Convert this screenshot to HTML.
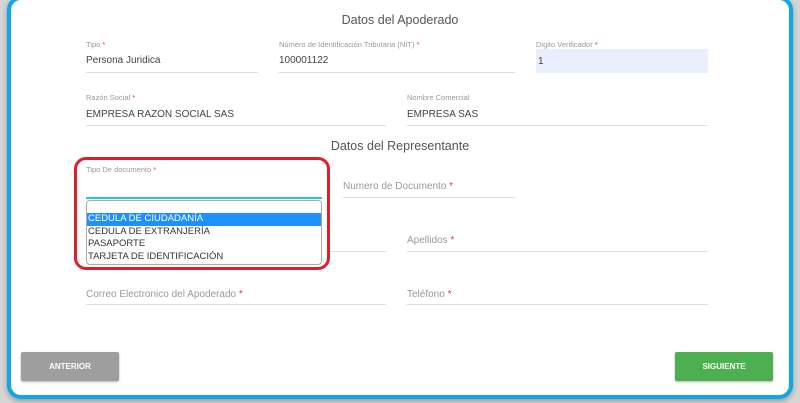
<!DOCTYPE html>
<html><head><meta charset="utf-8"><style>
*{box-sizing:border-box;margin:0;padding:0}
body{width:800px;height:403px;background:#d6d6d6;font-family:"Liberation Sans",sans-serif;position:relative;overflow:hidden}
.card{position:absolute;left:7px;top:-4px;width:786px;height:403px;background:#fff;border:4px solid #0ea5e9;border-radius:14px;box-shadow:0 2px 6px rgba(0,0,0,.3)}
.t{position:absolute;font-size:12.5px;color:#555;left:0;width:800px;text-align:center}
.f{position:absolute;border-bottom:1px solid #ddd}
.l{position:absolute;font-size:7.5px;color:#999}
.l b{color:#e53935;font-weight:normal}
.v{position:absolute;font-size:10px;color:#444}
.p{position:absolute;font-size:10px;color:#999}
.p b{color:#e53935;font-weight:normal}
.btn{position:absolute;top:352px;height:29px;width:98px;color:#fff;font-size:8px;font-weight:bold;text-align:center;line-height:29px;border-radius:2px;box-shadow:0 1px 2px rgba(0,0,0,.3)}
</style></head><body>
<div class="card"></div>
<div class="t" style="top:13px">Datos del Apoderado</div>
<div class="l" style="left:86px;top:40px">Tipo <b>*</b></div>
<div class="v" style="left:86px;top:55px">Persona Juridica</div>
<div class="f" style="left:86px;top:72px;width:172px"></div>
<div class="l" style="left:279px;top:40px">Número de Identificación Tributaria (NIT) <b>*</b></div>
<div class="v" style="left:279px;top:55px">100001122</div>
<div class="f" style="left:279px;top:72px;width:236px"></div>
<div class="l" style="left:536px;top:40px">Digito Verificador <b>*</b></div>
<div style="position:absolute;left:536px;top:49px;width:172px;height:24px;background:#e8f0fe"></div>
<div class="v" style="left:538px;top:56px">1</div>
<div class="l" style="left:86px;top:93px">Razón Social <b>*</b></div>
<div class="v" style="left:86px;top:109px">EMPRESA RAZON SOCIAL SAS</div>
<div class="f" style="left:86px;top:125px;width:300px"></div>
<div class="l" style="left:407px;top:93px">Nombre Comercial</div>
<div class="v" style="left:407px;top:109px">EMPRESA SAS</div>
<div class="f" style="left:407px;top:125px;width:301px"></div>
<div class="t" style="top:139px">Datos del Representante</div>
<div class="p" style="left:343px;top:181px">Numero de Documento <b>*</b></div>
<div class="f" style="left:343px;top:197px;width:172px"></div>
<div class="p" style="left:407px;top:235px">Apellidos <b>*</b></div>
<div class="f" style="left:407px;top:251px;width:301px"></div>
<div class="f" style="left:86px;top:251px;width:300px"></div>
<div class="p" style="left:86px;top:289px">Correo Electronico del Apoderado <b>*</b></div>
<div class="f" style="left:86px;top:304px;width:300px"></div>
<div class="p" style="left:407px;top:289px">Teléfono <b>*</b></div>
<div class="f" style="left:407px;top:304px;width:301px"></div>
<div style="position:absolute;left:74px;top:157px;width:256px;height:113px;border:3px solid #e11d2a;border-radius:12px;background:rgba(255,255,255,.9)"></div>
<div class="l" style="left:86px;top:165px">Tipo De documento <b>*</b></div>
<div style="position:absolute;left:86px;top:197px;width:236px;height:2px;background:#26c6da"></div>
<div style="position:absolute;left:86px;top:200px;width:236px;height:65px;border:1px solid #aaa;border-radius:4px;background:#fff;font-size:9.5px;color:#333;padding-top:12px;line-height:12.5px;overflow:hidden">
<div style="background:#1e90ff;color:#fff;padding-left:1px">CEDULA DE CIUDADANÍA</div>
<div style="padding-left:1px">CEDULA DE EXTRANJERÍA</div>
<div style="padding-left:1px">PASAPORTE</div>
<div style="padding-left:1px">TARJETA DE IDENTIFICACIÓN</div>
</div>
<div class="btn" style="left:21px;background:#9e9e9e">ANTERIOR</div>
<div class="btn" style="left:675px;background:#4caf50">SIGUIENTE</div>
</body></html>
